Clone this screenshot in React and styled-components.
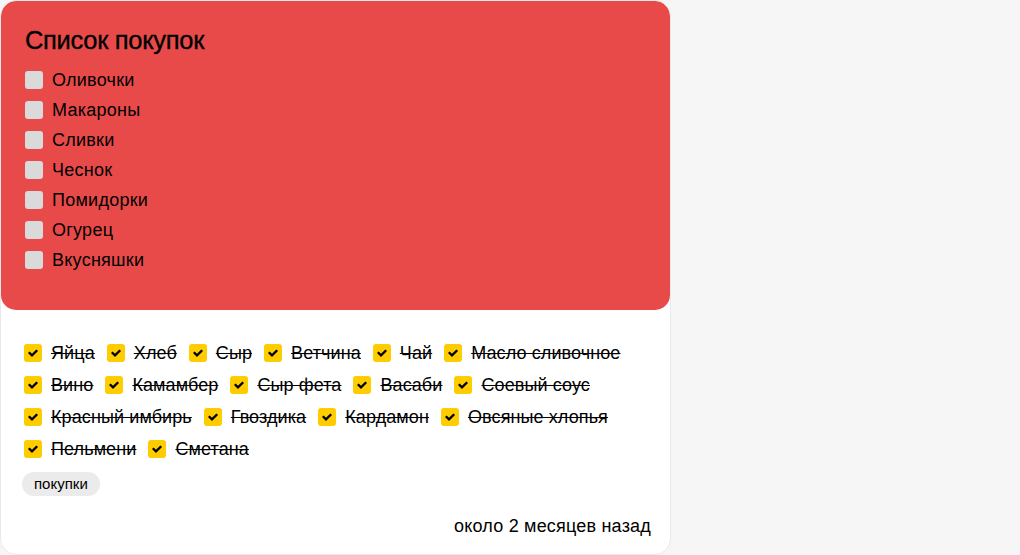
import React from "react";
import styled, { createGlobalStyle } from "styled-components";

const GlobalStyle = createGlobalStyle`
  html, body {
    margin: 0;
    padding: 0;
    background: #f6f6f6;
    font-family: "Liberation Sans", Arial, sans-serif;
    color: #000;
  }
`;

const Card = styled.div`
  width: 669px;
  height: 553px;
  background: #fff;
  border: 1px solid #e9e9e9;
  border-radius: 16px;
  display: flex;
  flex-direction: column;
  overflow: hidden;
`;

const Head = styled.div`
  background: #e84a4a;
  border-radius: 15px;
  padding: 22px 24px 35px;
  height: 309px;
  box-sizing: border-box;
`;

const Title = styled.h2`
  margin: 0 0 8px;
  font-size: 25.5px;
  line-height: 34px;
  font-weight: 400;
  letter-spacing: -0.3px;
  -webkit-text-stroke: 0.35px #000;
`;

const List = styled.ul`
  list-style: none;
  margin: 0;
  padding: 0;
`;

const Row = styled.li`
  display: flex;
  align-items: center;
  gap: 9px;
  height: 30px;
  font-size: 18px;
  letter-spacing: 0.25px;
`;

const Box = styled.span`
  width: 18px;
  height: 18px;
  border-radius: 3px;
  flex: none;
  display: flex;
  align-items: center;
  justify-content: center;
  background: ${(p) => (p.$checked ? "#ffcc00" : "#dadada")};
`;

const Body = styled.div`
  flex: 1;
  padding: 31px 19px 0 23px;
  display: flex;
  flex-direction: column;
`;

const Done = styled.div`
  display: flex;
  flex-wrap: wrap;
  column-gap: 12px;
  row-gap: 8px;
`;

const DoneItem = styled.div`
  display: flex;
  align-items: center;
  gap: 9px;
  height: 24px;
  font-size: 18px;
  letter-spacing: 0.1px;
  text-decoration: line-through;
`;

const Tag = styled.span`
  align-self: flex-start;
  margin: 11px 0 0 -2px;
  height: 24px;
  line-height: 24px;
  padding: 0 12px;
  border-radius: 12px;
  background: #ebebeb;
  font-size: 15px;
`;

const Footer = styled.div`
  margin-top: 19px;
  text-align: right;
  font-size: 18px;
  letter-spacing: 0.2px;
  line-height: 22px;
`;

const Check = () => (
  <svg width="12" height="10" viewBox="0 0 12 10">
    <polyline points="1.8,4.2 5,7.4 10.2,2.2" fill="none" stroke="#000" strokeWidth="2.3" />
  </svg>
);

const todo = ["Оливочки", "Макароны", "Сливки", "Чеснок", "Помидорки", "Огурец", "Вкусняшки"];
const done = [
  "Яйца", "Хлеб", "Сыр", "Ветчина", "Чай", "Масло сливочное",
  "Вино", "Камамбер", "Сыр фета", "Васаби", "Соевый соус",
  "Красный имбирь", "Гвоздика", "Кардамон", "Овсяные хлопья",
  "Пельмени", "Сметана",
];

export default function App() {
  return (
    <>
      <GlobalStyle />
      <Card>
        <Head>
          <Title>Список покупок</Title>
          <List>
            {todo.map((t) => (
              <Row key={t}>
                <Box />
                {t}
              </Row>
            ))}
          </List>
        </Head>
        <Body>
          <Done>
            {done.map((t) => (
              <DoneItem key={t}>
                <Box $checked>
                  <Check />
                </Box>
                {t}
              </DoneItem>
            ))}
          </Done>
          <Tag>покупки</Tag>
          <Footer>около 2 месяцев назад</Footer>
        </Body>
      </Card>
    </>
  );
}
